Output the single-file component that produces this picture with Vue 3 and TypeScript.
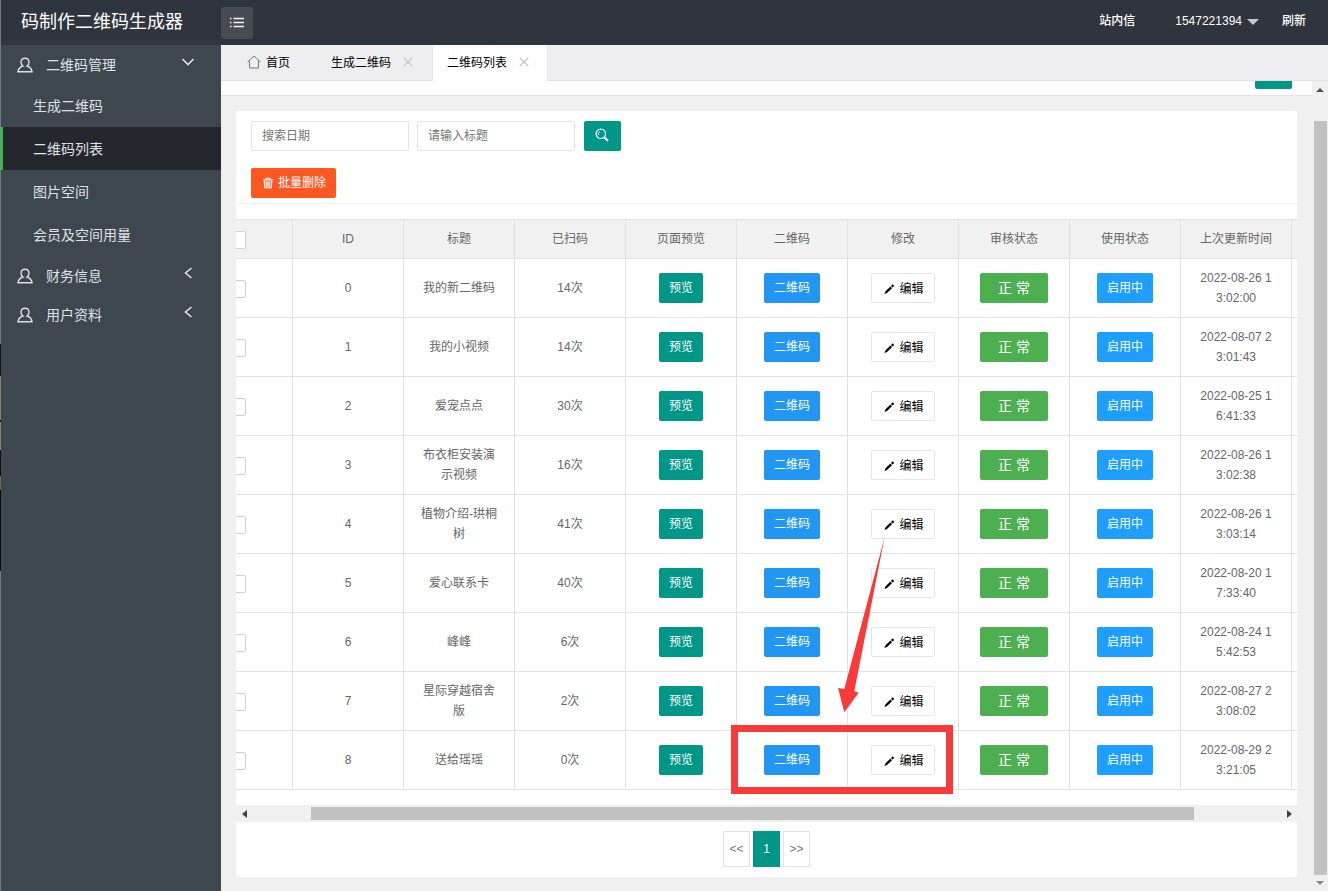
<script setup lang="ts">
import { ref } from 'vue'

interface MenuItem {
  label: string
  open: boolean
  children: string[]
}

interface CodeRow {
  id: number
  title: string
  scans: number
  updated: string
}

const menu = ref<MenuItem[]>([
  { label: '二维码管理', open: true, children: ['生成二维码', '二维码列表', '图片空间', '会员及空间用量'] },
  { label: '财务信息', open: false, children: [] },
  { label: '用户资料', open: false, children: [] },
])

const activeItem = ref('二维码列表')
const tabs = ['生成二维码', '二维码列表']
const columns = ['ID', '标题', '已扫码', '页面预览', '二维码', '修改', '审核状态', '使用状态', '上次更新时间']

const rows: CodeRow[] = [
  { id: 0, title: '我的新二维码', scans: 14, updated: '2022-08-26 13:02:00' },
  { id: 1, title: '我的小视频', scans: 14, updated: '2022-08-07 23:01:43' },
  { id: 2, title: '爱宠点点', scans: 30, updated: '2022-08-25 16:41:33' },
  { id: 3, title: '布衣柜安装演示视频', scans: 16, updated: '2022-08-26 13:02:38' },
  { id: 4, title: '植物介绍-珙桐树', scans: 41, updated: '2022-08-26 13:03:14' },
  { id: 5, title: '爱心联系卡', scans: 40, updated: '2022-08-20 17:33:40' },
  { id: 6, title: '峰峰', scans: 6, updated: '2022-08-24 15:42:53' },
  { id: 7, title: '星际穿越宿舍版', scans: 2, updated: '2022-08-27 23:08:02' },
  { id: 8, title: '送给瑶瑶', scans: 0, updated: '2022-08-29 23:21:05' },
]

const searchDate = ref('')
const searchTitle = ref('')
</script>

<template>
  <div class="app">
    <header class="topbar">
      <h1 class="brand">码制作二维码生成器</h1>
      <button class="toggle" type="button" aria-label="菜单">
        <svg width="16" height="12" viewBox="0 0 16 12" fill="none" stroke="#f2f3f4" stroke-width="1.4">
          <path d="M4.5 1.500H15M4.500 5.500H15M4.500 9.500H15M1 1.500h1.500M1 5.500h1.500M1 9.500h1.500" />
        </svg>
      </button>
      <nav class="top-links">
        <a href="#">站内信</a>
        <a href="#" class="account">1547221394
          <svg width="12" height="6" viewBox="0 0 12 6"><path d="M0 0h12L6 6z" fill="#c4c8cb" /></svg>
        </a>
        <a href="#">刷新</a>
      </nav>
    </header>

    <div class="body">
      <aside class="sidebar">
        <template v-for="item in menu" :key="item.label">
          <button class="group" type="button" :aria-expanded="item.open">
            <svg class="user" width="16" height="16" viewBox="0 0 16 16" fill="none" stroke="#dfe2e5" stroke-width="1.4">
              <path d="M8 1.2c2.500 0 4 1.700 4 4 0 1.700-.8 3-1.900 3.800 2.500.7 4.400 2.500 4.900 5.700H1c.5-3.200 2.400-5 4.900-5.700C4.800 8.200 4 6.900 4 5.200c0-2.300 1.500-4 4-4z" />
            </svg>
            <span>{{ item.label }}</span>
            <svg v-if="item.open" class="chev" width="14" height="14" viewBox="0 0 14 14" fill="none" stroke="#dfe2e5" stroke-width="1.6">
              <path d="M1.500 4l5.500 5.500L12.500 4" />
            </svg>
            <svg v-else class="chev" width="14" height="14" viewBox="0 0 14 14" fill="none" stroke="#dfe2e5" stroke-width="1.6">
              <path d="M10.500 2L4.500 7l6 5" />
            </svg>
          </button>
          <a
            v-for="child in item.children"
            :key="child"
            href="#"
            class="child"
            :class="{ active: child === activeItem }"
          >{{ child }}</a>
        </template>
      </aside>

      <main class="main">
        <nav class="tabs">
          <a href="#" class="tab home">
            <svg width="14" height="14" viewBox="0 0 14 14" fill="none" stroke="#777" stroke-width="1">
              <path d="M.5 7L7 1l6.500 6M2.500 5.500v7.500h9V5.500" />
            </svg>
            首页
          </a>
          <div v-for="tab in tabs" :key="tab" class="tab" :class="{ current: tab === activeItem }">
            <a href="#">{{ tab }}</a>
            <button type="button" class="close" aria-label="关闭">
              <svg width="10" height="10" viewBox="0 0 10 10" stroke="#bfbfc2" stroke-width="1.2"><path d="M.8.8l8.400 8.400M9.200.8L.8 9.200" /></svg>
            </button>
          </div>
        </nav>

        <div class="frame">
          <div class="scroller">
            <div class="strip"><button type="button" class="strip-btn" aria-label="刷新"></button></div>

            <section class="card">
              <form class="search" @submit.prevent>
                <input v-model="searchDate" type="text" placeholder="搜索日期" aria-label="搜索日期" />
                <input v-model="searchTitle" type="text" placeholder="请输入标题" aria-label="请输入标题" />
                <button type="submit" class="btn teal find" aria-label="搜索">
                  <svg width="14" height="14" viewBox="0 0 14 14" fill="none" stroke="#fff">
                    <circle cx="5.800" cy="5.800" r="4.700" stroke-width="1.200" />
                    <path d="M3.600 7.200A2.800 2.800 0 0 1 5 3.400" stroke-width=".8" />
                    <path d="M9.400 9.400l3.600 3.400" stroke-width="2" />
                  </svg>
                </button>
              </form>
              <div class="actions">
                <button type="button" class="btn orange">
                  <svg width="12" height="12" viewBox="0 0 12 12">
                    <path d="M1 2.700h10M4.200 2.500V1.300h3.600v1.200" fill="none" stroke="#fff" stroke-width="1.100" />
                    <path d="M2.200 3.200l.5 7.500h6.600l.5-7.500" fill="#fff" fill-opacity=".35" stroke="#fff" stroke-width="1.100" />
                    <path d="M4.700 4.600v4.800M6 4.600v4.800M7.300 4.600v4.800" stroke="#fff" stroke-width=".7" />
                  </svg>
                  批量删除
                </button>
              </div>

              <div class="table-wrap">
                <table>
                  <colgroup>
                    <col class="c-check" />
                    <col v-for="c in columns" :key="c" />
                    <col class="c-rest" />
                  </colgroup>
                  <thead>
                    <tr>
                      <th class="check"><input type="checkbox" aria-label="全选" /></th>
                      <th v-for="c in columns" :key="c">{{ c }}</th>
                      <th class="rest"></th>
                    </tr>
                  </thead>
                  <tbody>
                    <tr v-for="row in rows" :key="row.id">
                      <td class="check"><input type="checkbox" :aria-label="row.title" /></td>
                      <td>{{ row.id }}</td>
                      <td>{{ row.title }}</td>
                      <td>{{ row.scans }}次</td>
                      <td><button type="button" class="btn teal">预览</button></td>
                      <td><button type="button" class="btn azure">二维码</button></td>
                      <td>
                        <button type="button" class="btn plain">
                          <svg width="12" height="12" viewBox="0 0 12 12"><path d="M1.500 11l.9-2.600 5-4.800 1.600 1.600-5 4.900zM8 3l1.200-1.200c.3-.3.7-.3 1 0l.6.6c.3.3.3.700 0 1L9.600 4.600z" fill="#000" /></svg>
                          编辑
                        </button>
                      </td>
                      <td><button type="button" class="btn green">正 常</button></td>
                      <td><button type="button" class="btn blue">启用中</button></td>
                      <td>{{ row.updated }}</td>
                      <td class="rest"></td>
                    </tr>
                  </tbody>
                </table>
                <svg class="pointer" width="48" height="177" viewBox="0 0 48 177">
                  <path d="M46.700.7L16.300 155.300l4.400 1.400L6.300 176.300 0 152l6.300 1z" fill="#f93a3a" />
                </svg>
                <div class="highlight"></div>
              </div>

              <div class="hbar">
                <svg width="5" height="8" viewBox="0 0 5 8"><path d="M5 0v8L0 4z" fill="#404040" /></svg>
                <div class="hthumb"></div>
                <svg width="5" height="8" viewBox="0 0 5 8"><path d="M0 0v8l5-4z" fill="#404040" /></svg>
              </div>

              <nav class="pager">
                <a href="#">&lt;&lt;</a>
                <a href="#" class="on">1</a>
                <a href="#">&gt;&gt;</a>
              </nav>
            </section>
          </div>

          <div class="vbar">
            <svg width="8" height="4" viewBox="0 0 8 4"><path d="M0 4h8L4 0z" fill="#505050" /></svg>
            <div class="vthumb"></div>
            <svg width="8" height="4" viewBox="0 0 8 4"><path d="M0 0h8L4 4z" fill="#8a8a8a" /></svg>
          </div>
        </div>
      </main>
    </div>
  </div>
</template>

<style>
body {
  margin: 0;
  overflow: hidden;
}
</style>

<style scoped>
.app {
  position: relative;
  display: flex;
  flex-direction: column;
  height: 100vh;
  overflow: hidden;
  font-family: "Liberation Sans", "Noto Sans CJK SC", sans-serif;
  font-size: 12px;
  color: #666;
}
.app * {
  box-sizing: border-box;
}
.app::before {
  content: "";
  position: absolute;
  z-index: 1;
  left: 0;
  top: 0;
  width: 1px;
  height: 100%;
  background: linear-gradient(#6f7a84 344px, #10161d 344px 376px, #85856b 376px 420px, #10161d 420px 422px, #85856b 422px 450px, #0b1017 450px 476px, #6c6a40 476px 490px, #050910 490px 571px, #6f7a84 571px);
}
a {
  color: inherit;
  text-decoration: none;
}
button,
input {
  font-family: inherit;
  font-size: 12px;
  margin: 0;
}
button {
  border: 0;
  padding: 0;
  cursor: pointer;
}
svg {
  display: block;
  flex: none;
}

.topbar {
  display: flex;
  align-items: center;
  flex: none;
  height: 45px;
  background: #2f353d;
  color: #fff;
}
.brand {
  width: 221px;
  margin: 0;
  padding-left: 21px;
  font-size: 18px;
  font-weight: 400;
  line-height: 45px;
}
.toggle {
  display: flex;
  align-items: center;
  justify-content: center;
  width: 32px;
  height: 32px;
  border-radius: 3px;
  background: #474c53;
}
.top-links {
  display: flex;
  align-items: center;
  margin-left: auto;
  padding: 0 22px 2px 0;
  line-height: 41px;
  height: 45px;
  font-weight: 500;
}
.account {
  display: flex;
  align-items: center;
  gap: 5px;
  margin: 0 23px 0 40px;
}

.body {
  display: flex;
  flex: 1;
  min-height: 0;
}
.sidebar {
  display: flex;
  flex-direction: column;
  flex: none;
  width: 221px;
  background: #3e464e;
  color: #dfe2e5;
  font-size: 14px;
}
.group {
  display: flex;
  align-items: center;
  height: 39px;
  padding: 0 26px 0 17px;
  background: none;
  color: inherit;
  font-size: 14px;
}
.group span {
  padding-bottom: 2px;
}
.user {
  margin-right: 13px;
}
.chev {
  margin: 0 0 6px auto;
}
.child {
  height: 43px;
  padding-left: 33px;
  line-height: 45px;
}
.child.active {
  position: relative;
  z-index: 2;
  padding-left: 30px;
  border-left: 3px solid #44b15b;
  background: #24272c;
}

.main {
  display: flex;
  flex-direction: column;
  flex: 1;
  min-width: 0;
}
.tabs {
  display: flex;
  flex: none;
  height: 36px;
  background: #eeeef0;
  border-bottom: 1px solid #e2e2e4;
  color: #000;
}
.tab {
  display: flex;
  align-items: center;
  gap: 12px;
  height: 36px;
  padding: 0 19px 3px 14px;
  border-right: 1px solid #e6e6e6;
}
.tab.home {
  gap: 5px;
  padding: 0 27px 3px 26px;
  border-right: 0;
}
.tab.current {
  padding-right: 18px;
  background: #fff;
}
.close {
  background: none;
}

.frame {
  display: flex;
  flex: 1;
  min-height: 0;
  background: #f0f0f0;
}
.scroller {
  flex: 1;
  min-width: 0;
  overflow: hidden;
}
.strip {
  display: flex;
  justify-content: flex-end;
  align-items: flex-start;
  height: 15px;
  padding-right: 20px;
  border-bottom: 1px solid #e4e4e4;
  background: #fff;
}
.strip-btn {
  width: 37px;
  height: 8px;
  border-radius: 0 0 2px 2px;
  background: #009688;
}
.card {
  margin: 15px;
  padding: 10px 0;
  border-radius: 2px;
  background: #fff;
}
.search {
  display: flex;
  gap: 8px;
  padding: 0 15px;
}
.search input {
  width: 158px;
  height: 30px;
  padding: 0 10px;
  border: 1px solid #e4e4e4;
  border-radius: 2px;
  outline: 0;
  background: #fff;
  color: #333;
}
.search input::placeholder {
  color: #757575;
}
.actions {
  padding: 17px 15px 5px;
  border-bottom: 1px solid #f4f4f4;
}
.btn {
  display: inline-flex;
  align-items: center;
  justify-content: center;
  height: 30px;
  padding: 0 10px;
  border-radius: 2px;
  color: #fff;
  line-height: 28px;
  white-space: nowrap;
  vertical-align: middle;
}
.find {
  width: 37px;
  margin-left: 1px;
  padding: 0 12px 2px 10px;
}
.teal {
  background: #009688;
}
.orange {
  gap: 4px;
  padding: 0 10px 0 11px;
  background: #ff5722;
}
.azure {
  background: #2196f3;
}
.blue {
  background: #1e9fff;
}
.green {
  min-width: 68px;
  background: #4caf50;
  font-size: 14px;
}
.plain {
  gap: 4px;
  padding: 2px 10px 0 11px;
  border: 1px solid #e6e6e6;
  background: #fff;
  color: #000;
}

.table-wrap {
  position: relative;
  margin-top: 15px;
}
table {
  width: 100%;
  table-layout: fixed;
  border-collapse: separate;
  border-spacing: 0;
  line-height: 20px;
}
.c-check {
  width: 57px;
}
.c-rest {
  width: 5px;
}
th,
td {
  padding: 0 16px;
  border-right: 1px solid #e2e2e2;
  border-bottom: 1px solid #e2e2e2;
  font-weight: 400;
  text-align: center;
  word-break: break-all;
}
th {
  height: 40px;
  padding: 0;
  border-top: 1px solid #e2e2e2;
  background: #f1f1f1;
}
td {
  height: 59px;
}
th.rest,
td.rest {
  padding: 0;
  border-right: 0;
}
th.check,
td.check {
  padding: 2px 0 0;
  overflow: hidden;
  text-align: left;
}
.check input {
  display: block;
  width: 18px;
  height: 18px;
  margin-left: -8px;
  appearance: none;
  border: 1px solid #d2d2d2;
  border-radius: 2px;
  background: #fff;
}
.pointer {
  position: absolute;
  left: 602px;
  top: 317px;
  pointer-events: none;
}
.highlight {
  position: absolute;
  left: 495px;
  top: 506px;
  width: 222px;
  height: 69px;
  border: 7px solid #f93a3a;
  pointer-events: none;
}

.hbar {
  display: flex;
  align-items: center;
  height: 17px;
  margin-top: 15px;
  padding: 0 5px 0 6px;
  background: #f0f0f0;
}
.hthumb {
  flex: 1;
  height: 13px;
  margin: 0 93px 0 64px;
  background: #c1c1c1;
}
.vbar {
  display: flex;
  flex-direction: column;
  align-items: center;
  flex: none;
  width: 16px;
  padding: 7px 0 6px;
  background: #f0f0f0;
}
.vthumb {
  flex: 1;
  width: 13px;
  margin: 29px 0 6px 1px;
  background: #c1c1c1;
}
.pager {
  display: flex;
  justify-content: center;
  gap: 3px;
  margin-top: 9px;
}
.pager a {
  width: 27px;
  height: 36px;
  border: 1px solid #e2e2e2;
  line-height: 34px;
  text-align: center;
  color: #777;
}
.pager a.on {
  border-color: #009688;
  background: #009688;
  color: #fff;
}
</style>
